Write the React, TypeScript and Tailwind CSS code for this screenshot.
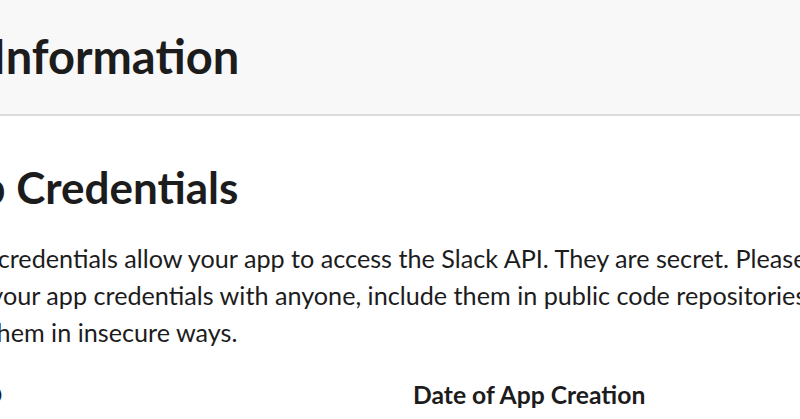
import React from "react";

const font = { fontFamily: "Lato, 'Noto Sans', sans-serif" };

export default function App() {
  return (
    <div
      className="w-[800px] h-[419px] overflow-hidden bg-white text-[#1d1c1d]"
      style={font}
    >
      <header className="h-[116px] bg-[#f8f8f8] border-b-2 border-[#dcdcdc] overflow-hidden">
        <h1 className="ml-[-129px] pt-[33px] text-[47px] leading-none font-bold whitespace-nowrap">
          Basic Information
        </h1>
      </header>

      <section className="ml-[-75px] w-[1100px] pt-[49px]">
        <h2 className="text-[44px] leading-none font-bold whitespace-nowrap">
          App Credentials
        </h2>
        <p className="mt-[31px] text-[25.2px] leading-[37px] w-[958px]">
          These credentials allow your app to access the Slack API. They are
          secret. Please don&apos;t share your app credentials with anyone,
          include them in public code repositories, or store them in insecure
          ways.
        </p>

        <div className="mt-[32px] grid grid-cols-[488px_1fr]">
          <div className="text-[24.7px] leading-none font-bold">App ID</div>
          <div className="text-[24.7px] leading-none font-bold">
            Date of App Creation
          </div>
        </div>
      </section>
    </div>
  );
}
